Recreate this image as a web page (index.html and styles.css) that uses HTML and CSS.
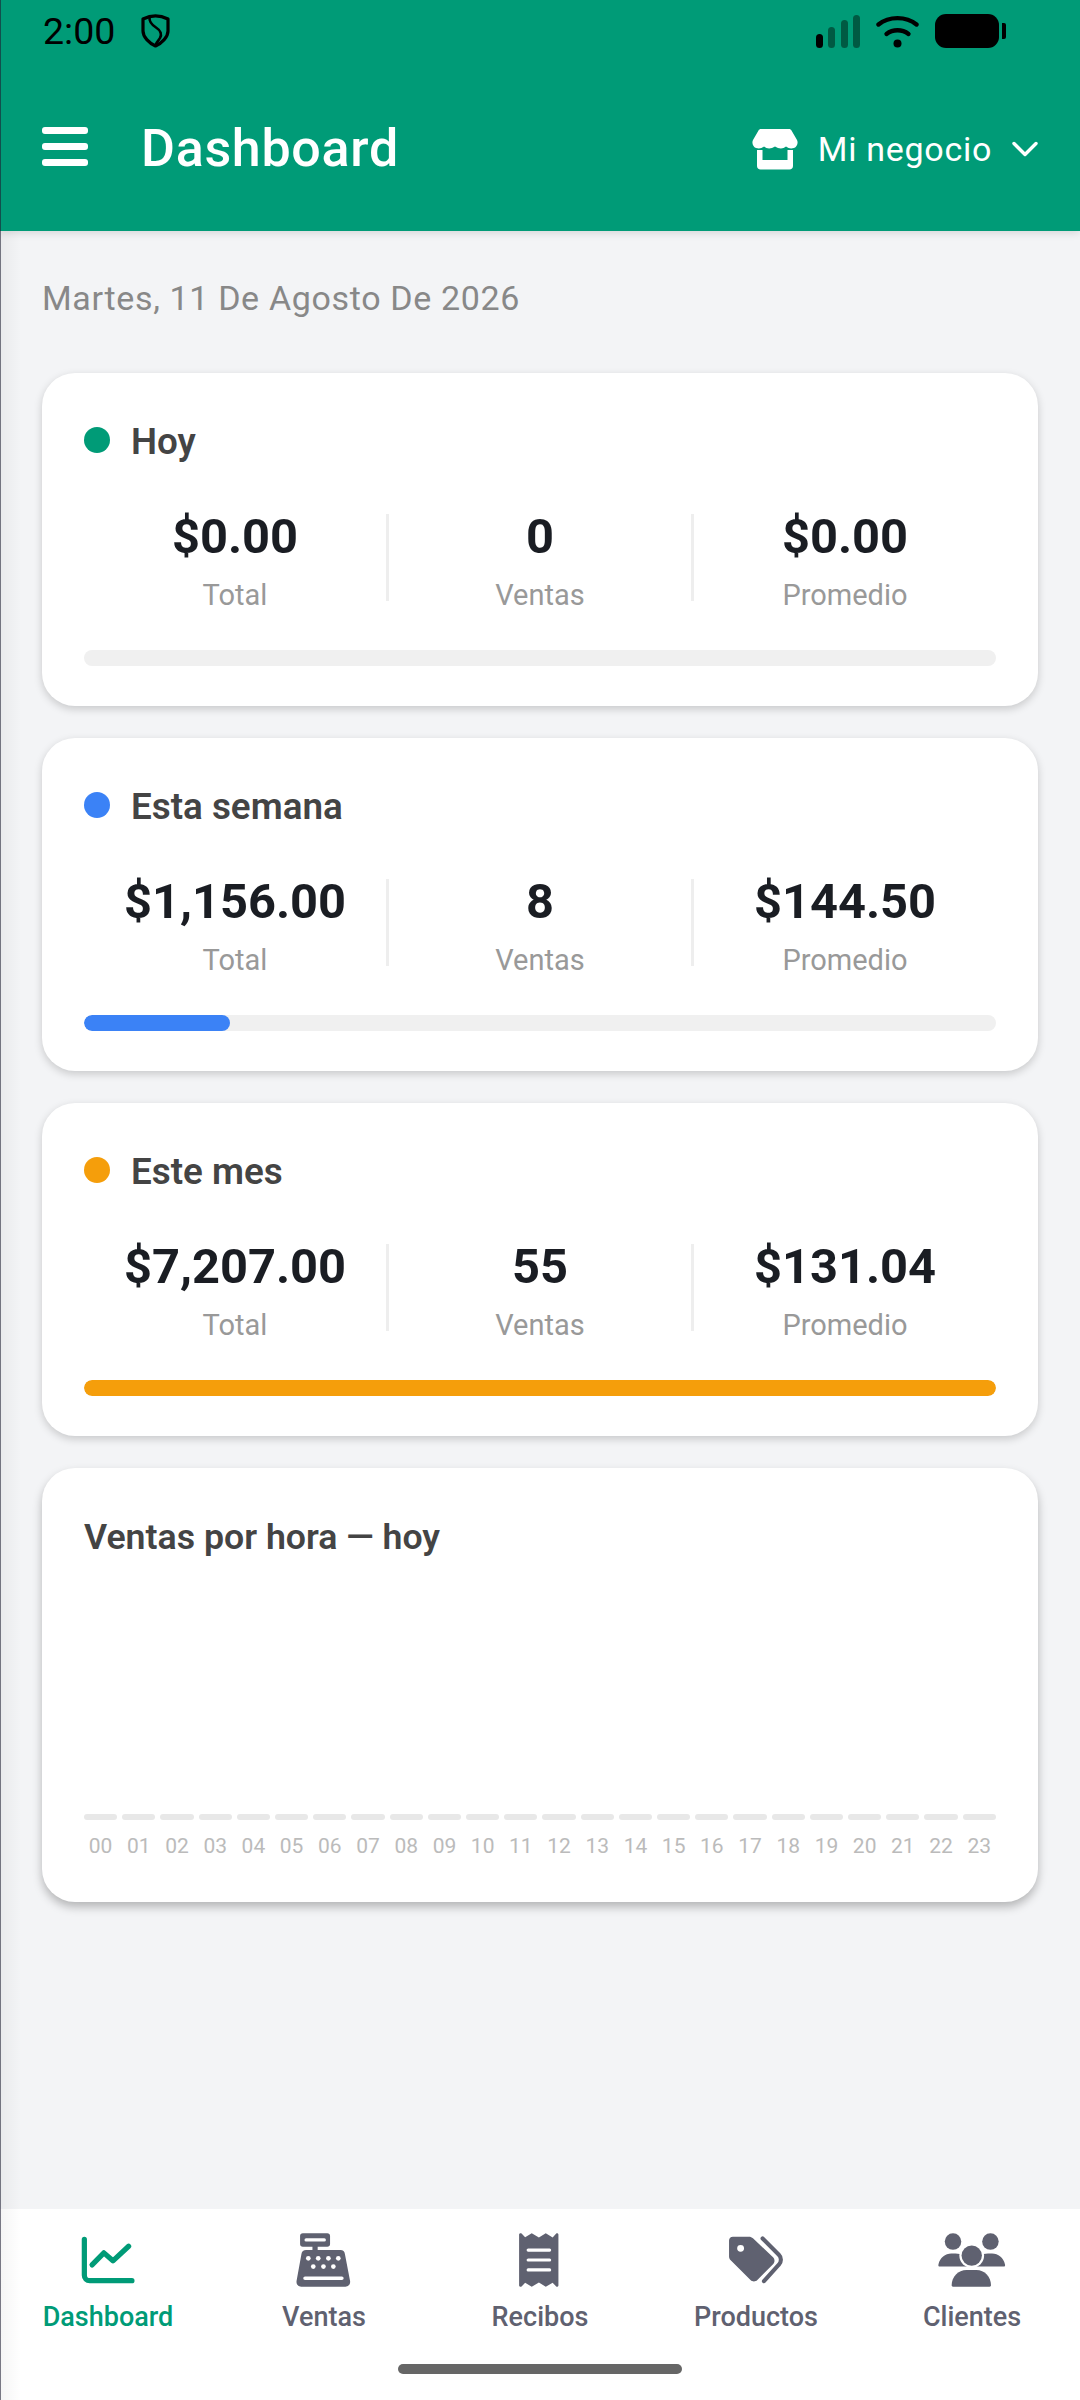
FILE: index.html
```html
<!DOCTYPE html>
<html lang="es">
<head>
	<meta charset="UTF-8" />
	<meta name="viewport" content="width=device-width, initial-scale=1" />
	<title>Dashboard</title>
	<link rel="stylesheet" href="styles.css">
</head>
<body>
<div class="app">

<header class="topbar">
	<div class="status">
		<span class="clock">2:00</span>
		<svg class="shield" viewBox="0 0 29 34" fill="none" stroke="#000" stroke-width="3.2" stroke-linejoin="round">
			<path d="M14.5 1.8C10 1.8 6 3 2 5V17C2 23 8 29 14.5 32C21 29 27 23 27 17V5C23 3 19 1.8 14.5 1.8Z"/>
			<path d="M8.5 3C8 8 11 11 15 13.5C20 16.5 21 21 19 24C18 26 16 27.5 14.5 31" stroke-width="2.6"/>
		</svg>
		<span class="status-right">
			<svg class="signal" viewBox="0 0 45 33">
				<rect x="0" y="19" width="7" height="14" rx="3.5" fill="#000"/>
				<rect x="12" y="12" width="7" height="21" rx="3.5" fill="#005a43"/>
				<rect x="25" y="5" width="7" height="28" rx="3.5" fill="#005a43"/>
				<rect x="37" y="0" width="7" height="33" rx="3.5" fill="#005a43"/>
			</svg>
			<svg class="wifi" viewBox="0 0 43 33" fill="none" stroke="#000" stroke-width="4.4" stroke-linecap="round">
				<path d="M2.5 9.5C13 1 30 1 40.5 9.5"/>
				<path d="M10.5 19C17 14 26 14 32.5 19"/>
				<circle cx="21.5" cy="28.5" r="4" fill="#000" stroke="none"/>
			</svg>
			<span class="battery"></span>
			<span class="battery-nub"></span>
		</span>
	</div>
	<div class="toolbar">
		<button class="menu-btn"><span></span><span></span><span></span></button>
		<h1>Dashboard</h1>
		<div class="biz">
			<svg class="store" viewBox="0 0 46 42" fill="#fff">
				<path d="M9 1H37C38 1 39 1.500 39.500 2.500L45 12C46.500 15 45 19 42 20C39 21 36.500 20.500 34 18.500C31 21 27 21 23 18.500C19 21 15 21 12 18.500C9.500 20.500 7 21 4 20C1 19 -.5 15 1 12L6.500 2.500C7 1.500 8 1 9 1Z"/>
				<path d="M5 22H10.500V32H35.500V22H41V38C41 40 39.500 41.500 37.500 41.500H8.500C6.500 41.500 5 40 5 38Z"/>
			</svg>
			<span>Mi negocio</span>
			<svg class="chevron" viewBox="0 0 26 16" fill="none" stroke="#fff" stroke-width="3.4" stroke-linecap="round" stroke-linejoin="round">
				<path d="M2 2.500L13 13.500L24 2.500"/>
			</svg>
		</div>
	</div>
</header>

<main class="content">
	<p class="date">Martes, 11 De Agosto De 2026</p>

	<section class="card">
		<div class="card-title"><span class="dot dot-green"></span>Hoy</div>
		<div class="stats">
			<div class="stat"><div class="stat-value">$0.00</div><div class="stat-label">Total</div></div>
			<div class="divider"></div>
			<div class="stat"><div class="stat-value">0</div><div class="stat-label">Ventas</div></div>
			<div class="divider"></div>
			<div class="stat"><div class="stat-value">$0.00</div><div class="stat-label">Promedio</div></div>
		</div>
		<div class="track"></div>
	</section>

	<section class="card">
		<div class="card-title"><span class="dot dot-blue"></span>Esta semana</div>
		<div class="stats">
			<div class="stat"><div class="stat-value">$1,156.00</div><div class="stat-label">Total</div></div>
			<div class="divider"></div>
			<div class="stat"><div class="stat-value">8</div><div class="stat-label">Ventas</div></div>
			<div class="divider"></div>
			<div class="stat"><div class="stat-value">$144.50</div><div class="stat-label">Promedio</div></div>
		</div>
		<div class="track"><div class="fill fill-blue" style="width: 16%"></div></div>
	</section>

	<section class="card">
		<div class="card-title"><span class="dot dot-orange"></span>Este mes</div>
		<div class="stats">
			<div class="stat"><div class="stat-value">$7,207.00</div><div class="stat-label">Total</div></div>
			<div class="divider"></div>
			<div class="stat"><div class="stat-value">55</div><div class="stat-label">Ventas</div></div>
			<div class="divider"></div>
			<div class="stat"><div class="stat-value">$131.04</div><div class="stat-label">Promedio</div></div>
		</div>
		<div class="track"><div class="fill fill-orange" style="width: 100%"></div></div>
	</section>

	<section class="card card-chart">
		<div class="card-title chart-title">Ventas por hora — hoy</div>
		<div class="hours">
			<div class="hour"><span class="hour-bar"></span><span class="hour-label">00</span></div>
			<div class="hour"><span class="hour-bar"></span><span class="hour-label">01</span></div>
			<div class="hour"><span class="hour-bar"></span><span class="hour-label">02</span></div>
			<div class="hour"><span class="hour-bar"></span><span class="hour-label">03</span></div>
			<div class="hour"><span class="hour-bar"></span><span class="hour-label">04</span></div>
			<div class="hour"><span class="hour-bar"></span><span class="hour-label">05</span></div>
			<div class="hour"><span class="hour-bar"></span><span class="hour-label">06</span></div>
			<div class="hour"><span class="hour-bar"></span><span class="hour-label">07</span></div>
			<div class="hour"><span class="hour-bar"></span><span class="hour-label">08</span></div>
			<div class="hour"><span class="hour-bar"></span><span class="hour-label">09</span></div>
			<div class="hour"><span class="hour-bar"></span><span class="hour-label">10</span></div>
			<div class="hour"><span class="hour-bar"></span><span class="hour-label">11</span></div>
			<div class="hour"><span class="hour-bar"></span><span class="hour-label">12</span></div>
			<div class="hour"><span class="hour-bar"></span><span class="hour-label">13</span></div>
			<div class="hour"><span class="hour-bar"></span><span class="hour-label">14</span></div>
			<div class="hour"><span class="hour-bar"></span><span class="hour-label">15</span></div>
			<div class="hour"><span class="hour-bar"></span><span class="hour-label">16</span></div>
			<div class="hour"><span class="hour-bar"></span><span class="hour-label">17</span></div>
			<div class="hour"><span class="hour-bar"></span><span class="hour-label">18</span></div>
			<div class="hour"><span class="hour-bar"></span><span class="hour-label">19</span></div>
			<div class="hour"><span class="hour-bar"></span><span class="hour-label">20</span></div>
			<div class="hour"><span class="hour-bar"></span><span class="hour-label">21</span></div>
			<div class="hour"><span class="hour-bar"></span><span class="hour-label">22</span></div>
			<div class="hour"><span class="hour-bar"></span><span class="hour-label">23</span></div>
		</div>
	</section>
</main>

<nav class="tabs">
	<a class="tab tab-active" href="#">
		<svg class="tab-icon" viewBox="0 0 24 24" fill="none" stroke="currentColor" stroke-width="1.9" stroke-linecap="round" stroke-linejoin="round">
			<path d="M3.400 4.500V17.500C3.400 18.700 4.200 19.500 5.400 19.500H20.700"/>
			<path d="M6.200 13.800L10.500 9.400L13.800 12.300L19.500 7"/>
		</svg>
		<span>Dashboard</span>
	</a>
	<a class="tab" href="#">
		<svg class="tab-icon" viewBox="0 0 24 24" fill="currentColor">
			<path fill-rule="evenodd" d="M4.300 2.300H13.200C13.800 2.300 14.200 2.700 14.200 3.300V6.200C14.200 6.800 13.800 7.200 13.200 7.200H9.700V8.400H18C18.900 8.400 19.500 9 19.600 9.800L21.500 19.700V20C21.500 21 20.700 21.700 19.800 21.700H3.700C2.800 21.700 2 21 2 20V19.700L3.800 9.800C3.900 9 4.600 8.400 5.500 8.400H7.800V7.200H4.300C3.700 7.200 3.300 6.800 3.300 6.200V3.300C3.300 2.700 3.700 2.300 4.300 2.300ZM5.500 4.100H12.100A.6 .6 0 0 1 12.100 5.300H5.500A.6 .6 0 0 1 5.500 4.100ZM5.100 18H18.500A.65 .65 0 0 1 18.500 19.300H5.100A.65 .65 0 0 1 5.100 18Z"/>
			<g fill="#fff">
				<circle cx="6.300" cy="11.400" r=".85"/><circle cx="9.900" cy="11.400" r=".85"/><circle cx="13.600" cy="11.400" r=".85"/><circle cx="17.200" cy="11.400" r=".85"/>
				<circle cx="8.100" cy="14.400" r=".85"/><circle cx="11.800" cy="14.400" r=".85"/><circle cx="15.400" cy="14.400" r=".85"/>
			</g>
		</svg>
		<span>Ventas</span>
	</a>
	<a class="tab" href="#">
		<svg class="tab-icon" viewBox="0 0 24 24" fill="currentColor">
			<path d="M4.400 2.800C4.400 2.300 4.900 2.100 5.300 2.400L6.600 3.700L9 2.300L11.600 3.800L14.100 2.300L16.600 3.800L17.900 2.400C18.200 2.100 18.700 2.300 18.700 2.800V21.200C18.700 21.700 18.200 21.900 17.900 21.600L16.600 20.300L14.100 21.700L11.600 20.200L9 21.700L6.600 20.300L5.300 21.600C4.900 21.900 4.400 21.700 4.400 21.200Z"/>
			<g stroke="#fff" stroke-width="1.150" stroke-linecap="round">
				<path d="M7.700 8.400H15.500"/><path d="M7.700 12H15.500"/><path d="M7.700 15.600H15.500"/>
			</g>
		</svg>
		<span>Recibos</span>
	</a>
	<a class="tab" href="#">
		<svg class="tab-icon" viewBox="0 0 24 24" fill="currentColor">
			<path fill-rule="evenodd" d="M3.600 3.500H9.400C10 3.500 10.500 3.700 10.900 4.100L18.200 11C18.900 11.700 18.900 12.800 18.200 13.500L12.500 19.300C11.800 20 10.700 20 10 19.300L2.800 12.100C2.400 11.700 2.200 11.200 2.200 10.700V4.900C2.200 4.100 2.800 3.500 3.600 3.500ZM6.400 6.500A1.250 1.250 0 1 0 6.400 9A1.250 1.250 0 1 0 6.400 6.500Z"/>
			<path d="M14.400 4.200L20.300 10.100C21.300 11.100 21.300 12.700 20.300 13.700L14.900 19.700" fill="none" stroke="currentColor" stroke-width="1.500" stroke-linecap="round"/>
		</svg>
		<span>Productos</span>
	</a>
	<a class="tab" href="#">
		<svg class="tab-icon" viewBox="0 0 24 24" fill="currentColor">
			<circle cx="5.100" cy="5.300" r="3"/>
			<circle cx="18.700" cy="5.300" r="3"/>
			<path d="M.3 14.400C-.2 14.400 -.3 14 -.2 13.600C.3 11.100 2.300 9.600 4.500 9.600H6C8.200 9.600 10 10.800 10.500 12.500V14.400Z"/>
			<path d="M23.500 14.400C24 14.400 24.100 14 24 13.600C23.500 11.100 21.500 9.600 19.300 9.600H17.800C15.600 9.600 13.800 10.800 13.300 12.500V14.400Z"/>
			<circle cx="11.900" cy="10.400" r="4.500" fill="#fff"/>
			<circle cx="11.900" cy="10.400" r="3.700"/>
			<path d="M5.100 21.700C4.800 21.700 4.600 21.500 4.600 21.200C4.600 18 7 15.600 10 15.600H13.600C16.600 15.600 18.900 18 18.900 21.200C18.900 21.500 18.700 21.700 18.400 21.700Z"/>
		</svg>
		<span>Clientes</span>
	</a>
</nav>

<div class="home-pill"></div>
</div>
</body>
</html>
```
FILE: styles.css
```css
* {
	box-sizing: border-box;
}

body {
	margin: 0;
	font-family: Roboto, "Liberation Sans", sans-serif;
	background: #f3f4f6;
}

.app {
	position: relative;
	width: 1080px;
	height: 2400px;
	display: flex;
	flex-direction: column;
	overflow: hidden;
}

/* edge of the drawer peeking in from the left */
.app::before {
	content: "";
	position: absolute;
	top: 0;
	bottom: 0;
	left: 0;
	width: 1px;
	background: rgba(30, 30, 50, 0.6);
	z-index: 10;
}

.app::after {
	content: "";
	position: absolute;
	top: 231px;
	bottom: 0;
	left: 1px;
	width: 20px;
	background: linear-gradient(to right, rgba(0, 0, 0, 0.04), rgba(0, 0, 0, 0));
	z-index: 9;
}

/* top bar */
.topbar {
	height: 231px;
	flex: none;
	background: #009b77;
	box-shadow: 0 2px 8px rgba(0, 0, 0, 0.12);
	position: relative;
	z-index: 2;
}

.status {
	height: 62px;
	padding-left: 43px;
	display: flex;
	align-items: center;
	color: #000;
}

.clock {
	font-size: 37.500px;
	line-height: 46px;
	width: 98px;
}

.shield {
	width: 29px;
	height: 34px;
}

.status-right {
	margin-left: auto;
	padding-right: 74px;
	display: flex;
	align-items: center;
}

.signal {
	width: 45px;
	height: 33px;
}

.wifi {
	width: 43px;
	height: 33px;
	margin-left: 15px;
}

.battery {
	width: 64px;
	height: 34px;
	margin-left: 16px;
	background: #000;
	border-radius: 11px;
}

.battery-nub {
	width: 4px;
	height: 16px;
	margin-left: 3px;
	background: #000;
	border-radius: 0 2px 2px 0;
}

.toolbar {
	height: 169px;
	padding: 4px 42px 0 42px;
	display: flex;
	align-items: center;
	color: #fff;
}

.menu-btn {
	width: 46px;
	margin-bottom: 4px;
	padding: 0;
	border: 0;
	background: none;
	display: flex;
	flex-direction: column;
	gap: 9px;
}

.menu-btn span {
	height: 7.300px;
	background: #fff;
	border-radius: 3px;
}

.toolbar h1 {
	margin: 0 0 0 53px;
	font-size: 52px;
	line-height: 60px;
	font-weight: 500;
	letter-spacing: 0.7px;
}

.biz {
	margin-left: auto;
	display: flex;
	align-items: center;
	font-size: 34px;
	letter-spacing: 0.7px;
}

.store {
	width: 46px;
	height: 42px;
	margin-right: 20px;
}

.chevron {
	width: 26px;
	height: 16px;
	margin-left: 20px;
}

/* content */
.content {
	flex: 1;
	padding: 47px 42px 0;
	display: flex;
	flex-direction: column;
	gap: 32px;
}

.date {
	margin: 0 0 23px;
	font-size: 34px;
	line-height: 40px;
	letter-spacing: 0.650px;
	color: #888;
}

.card {
	background: #fff;
	border-radius: 33px;
	padding: 47px 42px 40px;
	box-shadow: 0 3px 9px rgba(0, 0, 0, 0.18);
}

.card-chart {
	box-shadow: 0 5px 10px rgba(0, 0, 0, 0.26);
}

.card-title {
	display: flex;
	align-items: center;
	font-size: 36.800px;
	line-height: 44px;
	font-weight: 600;
	color: #444;
}

.chart-title {
	font-size: 35.700px;
}

.dot {
	width: 26px;
	height: 26px;
	border-radius: 50%;
	margin-right: 21px;
	position: relative;
	top: -2px;
}

.dot-green {
	background: #009b77;
}

.dot-blue {
	background: #3b82f6;
}

.dot-orange {
	background: #f59e0b;
}

.stats {
	display: flex;
	margin-top: 50px;
}

.stat {
	flex: 1;
	text-align: center;
}

.stat-value {
	font-size: 48.800px;
	line-height: 46px;
	font-weight: 700;
	color: #1a1d23;
}

.stat-label {
	margin-top: 18px;
	font-size: 29px;
	line-height: 34px;
	color: #999;
}

.divider {
	width: 3px;
	height: 87px;
	background: #eee;
}

.track {
	height: 16px;
	margin-top: 38px;
	background: #f0f0f0;
	border-radius: 8px;
	overflow: hidden;
}

.fill {
	height: 100%;
	border-radius: 8px;
}

.fill-blue {
	background: #3b82f6;
}

.fill-orange {
	background: #f59e0b;
}

/* hourly chart */
.hours {
	display: flex;
	gap: 5px;
	height: 300px;
	margin-bottom: 3px;
	align-items: flex-end;
}

.hour {
	flex: 1;
	min-width: 0;
	display: flex;
	flex-direction: column;
	align-items: center;
}

.hour-bar {
	width: 100%;
	height: 6px;
	background: #e8e8e8;
	border-radius: 3px;
}

.hour-label {
	margin-top: 13px;
	font-size: 21px;
	line-height: 26px;
	color: #bbb;
}

/* bottom tabs */
.tabs {
	height: 191px;
	flex: none;
	padding-top: 18px;
	background: #fff;
	display: flex;
}

.tab {
	flex: 1;
	display: flex;
	flex-direction: column;
	align-items: center;
	text-decoration: none;
	font-size: 27px;
	line-height: 34px;
	font-weight: 500;
	color: #5f6170;
}

.tab-active {
	color: #009b77;
}

.tab-icon {
	width: 66px;
	height: 66px;
	margin-bottom: 7px;
	overflow: visible;
}

.home-pill {
	position: absolute;
	left: 398px;
	bottom: 26px;
	width: 284px;
	height: 10px;
	background: #666;
	border-radius: 5px;
}
```
